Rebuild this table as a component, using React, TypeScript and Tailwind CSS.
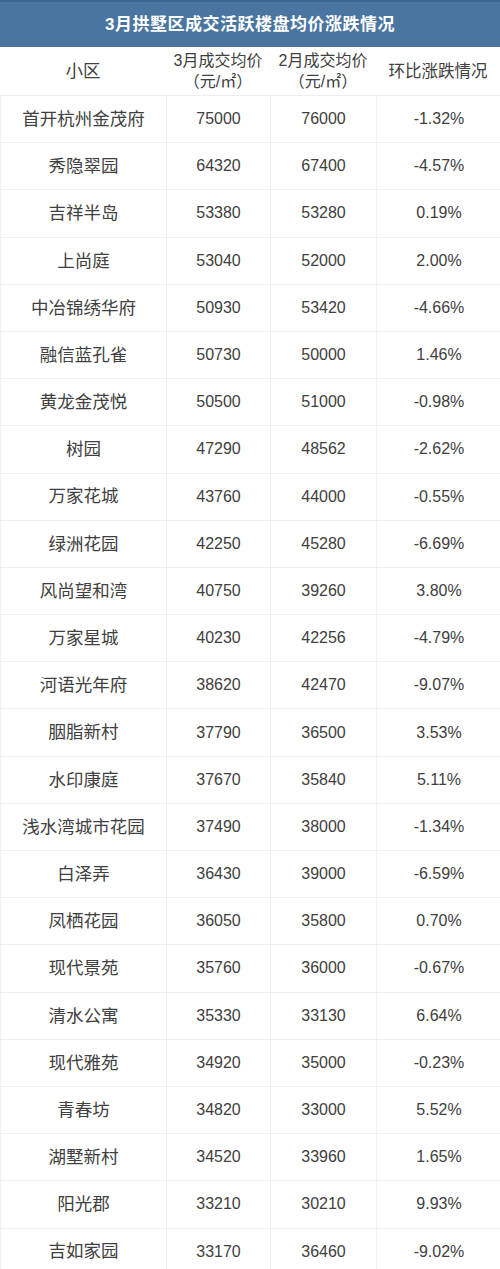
const rows: [string, string, string, string][] = [
  ["首开杭州金茂府", "75000", "76000", "-1.32%"],
  ["秀隐翠园", "64320", "67400", "-4.57%"],
  ["吉祥半岛", "53380", "53280", "0.19%"],
  ["上尚庭", "53040", "52000", "2.00%"],
  ["中冶锦绣华府", "50930", "53420", "-4.66%"],
  ["融信蓝孔雀", "50730", "50000", "1.46%"],
  ["黄龙金茂悦", "50500", "51000", "-0.98%"],
  ["树园", "47290", "48562", "-2.62%"],
  ["万家花城", "43760", "44000", "-0.55%"],
  ["绿洲花园", "42250", "45280", "-6.69%"],
  ["风尚望和湾", "40750", "39260", "3.80%"],
  ["万家星城", "40230", "42256", "-4.79%"],
  ["河语光年府", "38620", "42470", "-9.07%"],
  ["胭脂新村", "37790", "36500", "3.53%"],
  ["水印康庭", "37670", "35840", "5.11%"],
  ["浅水湾城市花园", "37490", "38000", "-1.34%"],
  ["白泽弄", "36430", "39000", "-6.59%"],
  ["凤栖花园", "36050", "35800", "0.70%"],
  ["现代景苑", "35760", "36000", "-0.67%"],
  ["清水公寓", "35330", "33130", "6.64%"],
  ["现代雅苑", "34920", "35000", "-0.23%"],
  ["青春坊", "34820", "33000", "5.52%"],
  ["湖墅新村", "34520", "33960", "1.65%"],
  ["阳光郡", "33210", "30210", "9.93%"],
  ["吉如家园", "33170", "36460", "-9.02%"],
];

const font = {
  fontFamily: '"Liberation Sans", "Noto Sans CJK SC", sans-serif',
};

export default function App() {
  return (
    <div className="w-[500px] bg-white text-[#404040]" style={font}>
      <div className="h-[47px] border-t-2 border-[#3b6690] bg-[#4a75a0] flex items-center justify-center text-white text-[17px] font-bold tracking-[0.5px]">
        3月拱墅区成交活跃楼盘均价涨跌情况
      </div>

      <div className="grid grid-cols-[166px_104px_106px_124px] h-[49px] border-b border-[#eeeeee] items-center text-center">
        <div className="text-[17.5px]">小区</div>
        <div className="text-[16px] leading-[21px]">
          <div>3月成交均价</div>
          <div>（元/㎡）</div>
        </div>
        <div className="text-[16px] leading-[21px]">
          <div>2月成交均价</div>
          <div>（元/㎡）</div>
        </div>
        <div className="text-[16.5px]">环比涨跌情况</div>
      </div>

      {rows.map(([name, mar, feb, pct]) => (
        <div
          key={name}
          className="grid grid-cols-[166px_104px_106px_124px] h-[47.2px] border-b border-l border-[#efefef] text-center"
        >
          <div className="flex items-center justify-center text-[17.5px] border-r border-[#f0f0f0]">
            {name}
          </div>
          <div className="flex items-center justify-center text-[16px] border-r border-[#f0f0f0]">
            {mar}
          </div>
          <div className="flex items-center justify-center text-[16px] border-r border-[#f0f0f0]">
            {feb}
          </div>
          <div className="flex items-center justify-center text-[16px]">
            {pct}
          </div>
        </div>
      ))}
    </div>
  );
}
